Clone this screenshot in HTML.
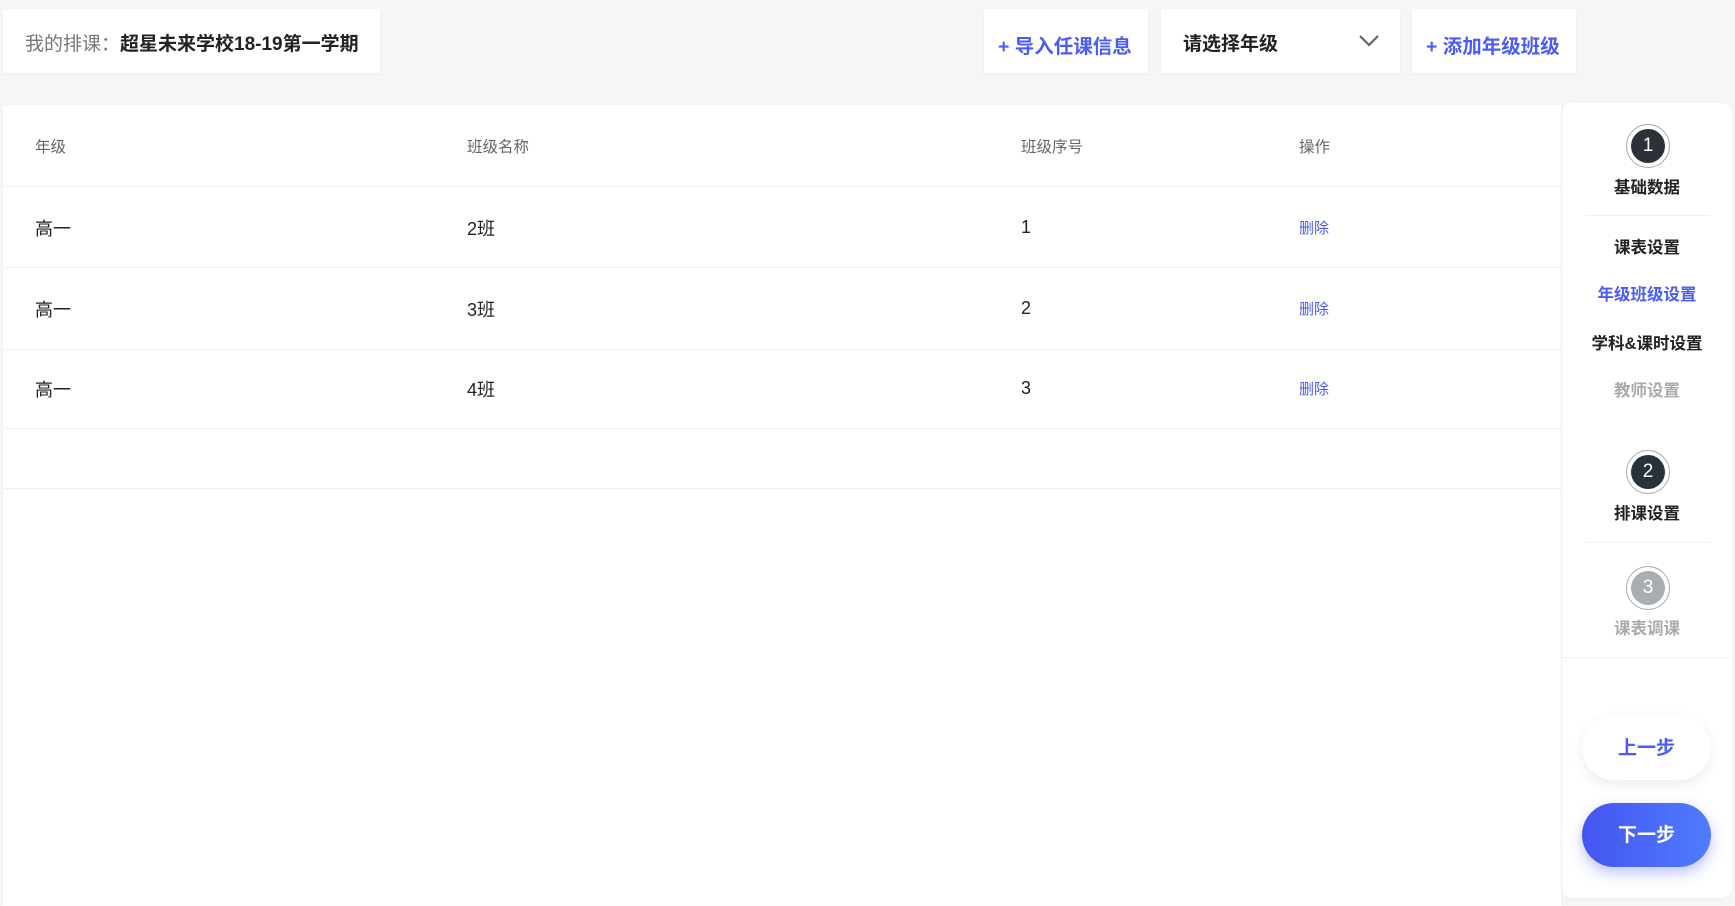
<!DOCTYPE html>
<html><head><meta charset="utf-8"><style>
*{margin:0;padding:0;box-sizing:border-box}
body{width:1735px;height:906px;background:#f6f6f6;font-family:"Liberation Sans","Noto Sans CJK SC",sans-serif;position:relative;overflow:hidden;color:#222}
.box{position:absolute;background:#fff;box-shadow:0 1px 4px rgba(0,0,0,.04)}
.t{position:absolute;white-space:nowrap}
.line{position:absolute;left:3px;width:1558px;height:1px;background:#f0f0f0}
.hd{font-size:15.5px;color:#666;top:135px}
.cell{font-size:18px;color:#222}
.del{font-size:15px;color:#4a5cf5}
.sb{position:absolute;left:1562px;width:170px;text-align:center;font-size:16.5px;font-weight:bold;color:#222}
.circ{position:absolute;left:1626px;width:44px;height:44px;border-radius:50%;border:1px solid #aaa;background:#fff}
.circ div{position:absolute;left:4px;top:4px;width:34px;height:34px;border-radius:50%;background:#2a3139;color:#fff;font-size:19px;text-align:center;line-height:34px}
.sep{position:absolute;left:1585px;width:125px;height:1px;background:#f0f0f0}
</style></head><body>
<div class="box" style="left:3px;top:9px;width:377px;height:64px"></div>
<div class="t" style="left:25px;top:29px;font-size:19px;color:#777">我的排课：<b style="color:#222">超星未来学校18-19第一学期</b></div>
<div class="box" style="left:984px;top:9px;width:164px;height:64px"></div>
<div class="t" style="left:998px;top:30px;font-size:19.5px;font-weight:bold;color:#4a5cf5">+ 导入任课信息</div>
<div class="box" style="left:1161px;top:9px;width:239px;height:64px"></div>
<div class="t" style="left:1183px;top:29px;font-size:19px;font-weight:bold;color:#222">请选择年级</div>
<svg style="position:absolute;left:1358px;top:34px" width="22" height="14"><path d="M2 2 L11 11 L20 2" fill="none" stroke="#666" stroke-width="2.2"/></svg>
<div class="box" style="left:1412px;top:9px;width:164px;height:64px"></div>
<div class="t" style="left:1426px;top:30px;font-size:19.5px;font-weight:bold;color:#4a5cf5">+ 添加年级班级</div>

<div class="box" style="left:3px;top:105px;width:1558px;height:801px"></div>
<div class="t hd" style="left:35px">年级</div>
<div class="t hd" style="left:467px">班级名称</div>
<div class="t hd" style="left:1021px">班级序号</div>
<div class="t hd" style="left:1299px">操作</div>
<div class="line" style="top:186px"></div>
<div class="line" style="top:267px"></div>
<div class="line" style="top:349px"></div>
<div class="line" style="top:428px"></div>
<div class="line" style="top:488px"></div>
<div class="t cell" style="left:35px;top:215px">高一</div><div class="t cell" style="left:467px;top:215px">2班</div><div class="t cell" style="left:1021px;top:217px">1</div><div class="t del" style="left:1299px;top:217px">删除</div>
<div class="t cell" style="left:35px;top:296px">高一</div><div class="t cell" style="left:467px;top:296px">3班</div><div class="t cell" style="left:1021px;top:298px">2</div><div class="t del" style="left:1299px;top:298px">删除</div>
<div class="t cell" style="left:35px;top:376px">高一</div><div class="t cell" style="left:467px;top:376px">4班</div><div class="t cell" style="left:1021px;top:378px">3</div><div class="t del" style="left:1299px;top:378px">删除</div>

<div class="box" style="left:1562px;top:103px;width:170px;height:795px;border-radius:10px"></div>
<div class="circ" style="top:124px"><div>1</div></div>
<div class="sb" style="top:174px">基础数据</div>
<div class="sep" style="top:215px"></div>
<div class="sb" style="top:234px">课表设置</div>
<div class="sb" style="top:281px;color:#4a5cf5">年级班级设置</div>
<div class="sb" style="top:330px">学科&amp;课时设置</div>
<div class="sb" style="top:377px;color:#aaa">教师设置</div>
<div class="circ" style="top:450px"><div>2</div></div>
<div class="sb" style="top:500px">排课设置</div>
<div class="sep" style="top:542px"></div>
<div class="circ" style="top:566px"><div style="background:#aaadb2">3</div></div>
<div class="sb" style="top:615px;color:#aaa">课表调课</div>
<div class="sep" style="top:657px;left:1562px;width:170px"></div>
<div style="position:absolute;left:1582px;top:716px;width:129px;height:64px;border-radius:32px;background:#fff;box-shadow:0 4px 12px rgba(0,0,0,.08);text-align:center;line-height:66px;font-size:19px;font-weight:bold;color:#4a5cf5">上一步</div>
<div style="position:absolute;left:1582px;top:803px;width:129px;height:64px;border-radius:32px;background:linear-gradient(90deg,#4455f0,#4f7cff);box-shadow:0 6px 14px rgba(70,90,240,.35);text-align:center;line-height:66px;font-size:19px;font-weight:bold;color:#fff">下一步</div>
</body></html>
